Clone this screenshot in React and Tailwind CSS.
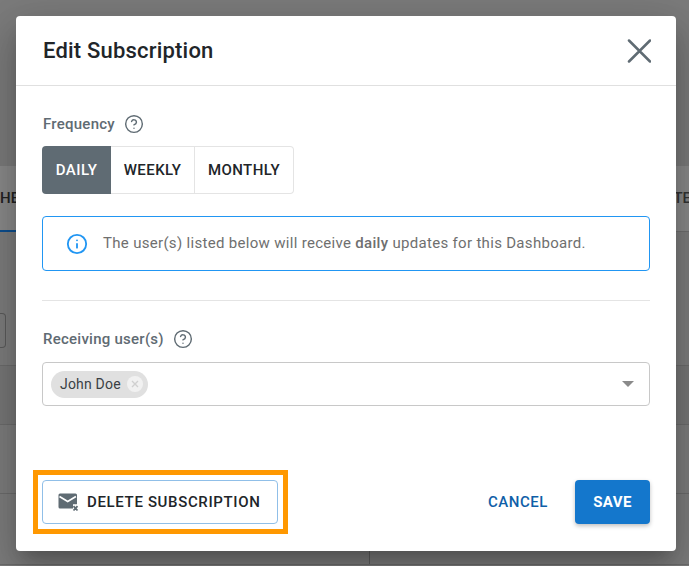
import React from "react";
import { CircleHelp, Info } from "lucide-react";

function Help() {
  return <CircleHelp className="w-[20px] h-[20px] text-[#5f6b73]" strokeWidth={1.7} />;
}

function MailX() {
  return (
    <svg width="21" height="19" viewBox="0 0 21 19" className="shrink-0">
      <path d="M2 .5h15.5a1.5 1.5 0 0 1 1.5 1.5v9.2h-4v4.3H2A1.5 1.5 0 0 1 .5 14V2A1.5 1.5 0 0 1 2 .5z" fill="#5f6b73" />
      <path d="M1.5 3.5l8.2 5 8.2-5" fill="none" stroke="#fff" strokeWidth="1.7" />
      <path d="M15.5 13.2l4 4.3M19.5 13.2l-4 4.3" stroke="#5f6b73" strokeWidth="1.8" fill="none" />
    </svg>
  );
}

function CloseIcon() {
  return (
    <svg width="24" height="24" viewBox="0 0 24 24" className="shrink-0">
      <path d="M2 1.5l21 21M23 1.5l-21 21" stroke="#5f6b73" strokeWidth="2.5" fill="none" strokeLinecap="round" />
    </svg>
  );
}

export default function App() {
  return (
    <div className="relative w-[689px] h-[566px] overflow-hidden bg-[#7d7d7d] font-['Roboto',sans-serif]">
      <div className="h-[166px] bg-[#7b7b7b]" />
      <div className="h-[66px] bg-[#8a8a8a] flex justify-between items-center border-b border-[#6f6f6f] relative">
        <span className="text-[15px] font-medium text-[#222] -ml-[9px] whitespace-nowrap">SHEDULE</span>
        <span className="text-[15px] font-medium text-[#333] -mr-[2px] whitespace-nowrap">TE</span>
        <div className="absolute left-0 bottom-[-1px] w-[40px] h-[2px] bg-[#0d4f8f]" />
      </div>
      <div className="h-[134px] border-b border-[#6c6c6c] flex items-end pb-[17px]">
        <div className="w-[6px] h-[35px] border border-[#5b5b5b] rounded-r-[4px] border-l-0" />
      </div>
      <div className="h-[59px] border-b border-[#6c6c6c] bg-[#777777]" />
      <div className="h-[69px] border-b border-[#6c6c6c]" />
      <div className="h-[71px] border-b border-[#6c6c6c] flex">
        <div className="w-[370px] border-r border-[#5e5e5e]" />
      </div>

      <div className="absolute left-[16px] top-[16px] w-[660px] h-[535px] bg-white rounded-[4px] shadow-[0_11px_15px_-7px_rgba(0,0,0,0.2),0_24px_38px_3px_rgba(0,0,0,0.14),0_9px_46px_8px_rgba(0,0,0,0.12)] flex flex-col">
        <div className="h-[70px] border-b border-[#e0e0e0] flex items-center justify-between pl-[27px] pr-[25px] shrink-0">
          <h2 className="text-[22px] font-medium text-[#212529] leading-none tracking-[0.2px]">Edit Subscription</h2>
          <CloseIcon />
        </div>

        <div className="flex-1 px-[26px] flex flex-col">
          <div className="flex items-center gap-[9px] mt-[28px] h-[20px] pl-[1px]">
            <span className="text-[15px] font-medium text-[#5f6b73] tracking-[0.25px]">Frequency</span>
            <Help />
          </div>
          <div className="flex mt-[12px] h-[48px] w-fit text-[15px] font-medium tracking-[0.45px]">
            <div className="w-[69px] bg-[#5f6b73] text-white rounded-l-[4px] flex items-center justify-center">DAILY</div>
            <div className="w-[84px] border-y border-[#e4e4e4] border-r text-[#212529] flex items-center justify-center">WEEKLY</div>
            <div className="w-[99px] border-y border-r border-[#e4e4e4] rounded-r-[4px] text-[#212529] flex items-center justify-center">MONTHLY</div>
          </div>
          <div className="mt-[22px] h-[55px] border border-[#2196f3] rounded-[4px] flex items-center pl-[23px] gap-[15px]">
            <Info className="w-[22px] h-[22px] text-[#2196f3]" strokeWidth={2} />
            <p className="text-[15px] text-[#6f6f6f] tracking-[0.31px] whitespace-nowrap">
              The user(s) listed below will receive <strong className="font-medium">daily</strong> updates for this Dashboard.
            </p>
          </div>
          <div className="mt-[29px] border-t border-[#e4e4e4]" />
          <div className="flex items-center gap-[9px] mt-[28px] h-[20px] pl-[1px]">
            <span className="text-[15px] font-medium text-[#5f6b73] tracking-[0.25px]">Receiving user(s)</span>
            <Help />
          </div>
          <div className="mt-[13px] h-[44px] border border-[#c8c8c8] rounded-[4px] flex items-center justify-between pl-[8px] pr-[15px]">
            <div className="h-[27px] bg-[#e0e0e0] rounded-full flex items-center pl-[9px] pr-[5px] gap-[6px]">
              <span className="text-[14px] text-[#3a3f44] tracking-[0.2px]">John Doe</span>
              <span className="w-[16px] h-[16px] rounded-full bg-[#f1f1f1] flex items-center justify-center">
                <svg width="8" height="8" viewBox="0 0 8 8"><path d="M1 1l6 6M7 1l-6 6" stroke="#d0d0d0" strokeWidth="1.4" fill="none" /></svg>
              </span>
            </div>
            <div className="w-0 h-0 border-x-[6px] border-x-transparent border-t-[6px] border-t-[#8a8a8a]" />
          </div>
        </div>

        <div className="flex items-center justify-between px-[26px] pb-[27px] shrink-0">
          <div className="relative">
            <div className="h-[44px] w-[236px] border border-[#90bfe8] rounded-[4px] flex items-center pl-[15px] gap-[8px] text-[15px] font-medium tracking-[0.65px] text-[#212529] whitespace-nowrap">
              <MailX />
              DELETE SUBSCRIPTION
            </div>
            <div className="absolute -left-[9px] -top-[10px] w-[255px] h-[64px] border-[5px] border-[#ff9800] pointer-events-none" />
          </div>
          <div className="flex items-center gap-[27px]">
            <span className="text-[15px] font-medium tracking-[0.55px] text-[#0f5fa8]">CANCEL</span>
            <div className="w-[75px] h-[44px] bg-[#1477cc] rounded-[4px] shadow-[0_2px_4px_rgba(0,0,0,0.25)] text-white text-[15px] font-bold tracking-[0.4px] flex items-center justify-center">SAVE</div>
          </div>
        </div>
      </div>
    </div>
  );
}
